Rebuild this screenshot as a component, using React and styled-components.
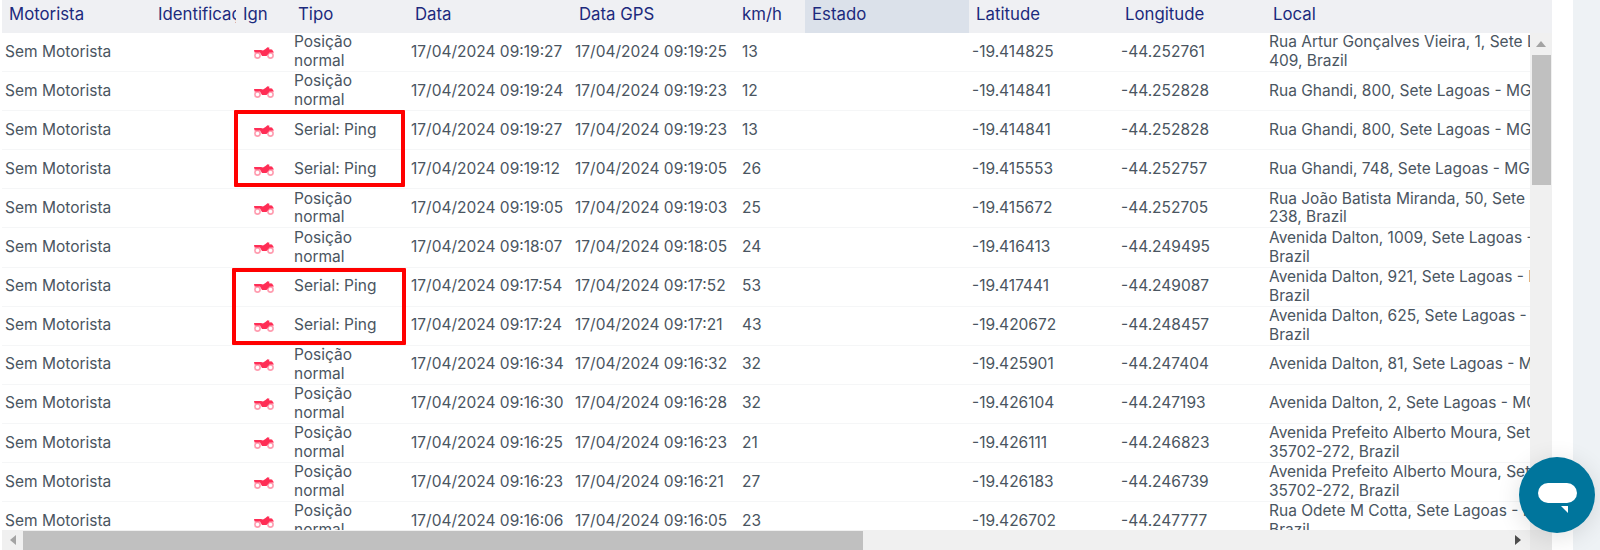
import styled, { createGlobalStyle } from "styled-components"

const COLUMNS = "149px 85px 55px 117px 164px 163px 70px 164px 149px 148px 430px"

const HEADERS = ["Motorista", "Identificação", "Ign", "Tipo", "Data", "Data GPS", "km/h", "Estado", "Latitude", "Longitude", "Local"]

const ALBERTO = "Avenida Prefeito Alberto Moura, Sete Lagoas - MG, 35702-272, Brazil"

const ROWS = [
    ["Posição normal", "09:19:27", "09:19:25", 13, "-19.414825", "-44.252761", "Rua Artur Gonçalves Vieira, 1, Sete Lagoas - MG, 35700-409, Brazil"],
    ["Posição normal", "09:19:24", "09:19:23", 12, "-19.414841", "-44.252828", "Rua Ghandi, 800, Sete Lagoas - MG, 35700-238, Brazil"],
    ["Serial: Ping", "09:19:27", "09:19:23", 13, "-19.414841", "-44.252828", "Rua Ghandi, 800, Sete Lagoas - MG, 35700-238, Brazil"],
    ["Serial: Ping", "09:19:12", "09:19:05", 26, "-19.415553", "-44.252757", "Rua Ghandi, 748, Sete Lagoas - MG, 35700-238, Brazil"],
    ["Posição normal", "09:19:05", "09:19:03", 25, "-19.415672", "-44.252705", "Rua João Batista Miranda, 50, Sete Lagoas - MG, 35700-238, Brazil"],
    ["Posição normal", "09:18:07", "09:18:05", 24, "-19.416413", "-44.249495", "Avenida Dalton, 1009, Sete Lagoas - MG, 35700-000, Brazil"],
    ["Serial: Ping", "09:17:54", "09:17:52", 53, "-19.417441", "-44.249087", "Avenida Dalton, 921, Sete Lagoas - MG, 35700-000, Brazil"],
    ["Serial: Ping", "09:17:24", "09:17:21", 43, "-19.420672", "-44.248457", "Avenida Dalton, 625, Sete Lagoas - MG, 35700-000, Brazil"],
    ["Posição normal", "09:16:34", "09:16:32", 32, "-19.425901", "-44.247404", "Avenida Dalton, 81, Sete Lagoas - MG, 35700, Brazil"],
    ["Posição normal", "09:16:30", "09:16:28", 32, "-19.426104", "-44.247193", "Avenida Dalton, 2, Sete Lagoas - MG, 35700, Brazil"],
    ["Posição normal", "09:16:25", "09:16:23", 21, "-19.426111", "-44.246823", ALBERTO],
    ["Posição normal", "09:16:23", "09:16:21", 27, "-19.426183", "-44.246739", ALBERTO],
    ["Posição normal", "09:16:06", "09:16:05", 23, "-19.426702", "-44.247777", "Rua Odete M Cotta, Sete Lagoas - MG, 35700-000, Brazil"],
]

function MotoIcon() {
    return (
        <svg width="20" height="12" viewBox="0 0 20 12">
            <circle cx="3.5" cy="8.5" r="2.6" fill="none" stroke="#ff9db0" strokeWidth="1.6" />
            <circle cx="16.5" cy="8.5" r="2.6" fill="none" stroke="#ff9db0" strokeWidth="1.6" />
            <path d="M0 3 L7 3 L9 3.6 L11.5 2 L13.5 0.3 L15.5 0.8 L15 2.2 L18 2.6 L20 5.5 L15.5 5.5 L12.5 9 L8 9 L6 5.6 L0.5 5.6 Z" fill="#ff2d55" />
        </svg>
    )
}

export default function App() {
    return (
        <>
            <GlobalStyle />
            <Page>
                <Frame>
                    <Header>
                        {HEADERS.map((h) => (
                            <HeaderCell key={h} $active={h === "Estado"}>{h}</HeaderCell>
                        ))}
                    </Header>

                    <Middle>
                        <Rows>
                            {ROWS.map((r, i) => (
                                <Row key={i}>
                                    <Cell>Sem Motorista</Cell>
                                    <Cell />
                                    <IconCell><MotoIcon /></IconCell>
                                    <Cell>{r[0]}</Cell>
                                    <DateCell>17/04/2024 {r[1]}</DateCell>
                                    <DateCell>17/04/2024 {r[2]}</DateCell>
                                    <SpeedCell>{r[3]}</SpeedCell>
                                    <Cell />
                                    <Cell>{r[4]}</Cell>
                                    <Cell>{r[5]}</Cell>
                                    <Cell>{r[6]}</Cell>
                                </Row>
                            ))}
                        </Rows>
                        <VScroll>
                            <ArrowUp />
                            <VThumb />
                        </VScroll>
                    </Middle>

                    <HScroll>
                        <ArrowLeft />
                        <HThumb />
                        <ArrowRight />
                        <Corner />
                    </HScroll>

                    <Highlight $top={110} $left={234} $width={171} />
                    <Highlight $top={268} $left={232} $width={174} />
                </Frame>
                <Gutter />
                <Strip />
            </Page>

            <ChatButton>
                <ChatBubble />
                <ChatTail />
            </ChatButton>
        </>
    )
}

const GlobalStyle = createGlobalStyle`
    html, body {
        margin: 0;
        height: 550px;
        overflow: hidden;
        background: #ffffff;
    }
`

const Page = styled.div`
    display: flex;
    height: 550px;
    padding-left: 2px;
    font-family: Inter, "Noto Sans", sans-serif;
    font-size: 15.5px;
    color: #4a5561;
`

const Frame = styled.div`
    display: flex;
    flex-direction: column;
    width: 1550px;
`

const Header = styled.div`
    flex: none;
    display: grid;
    grid-template-columns: ${COLUMNS};
    height: 33px;
    overflow: hidden;
    background: #eff0f3;
    color: #1c2a7d;
    font-size: 16.8px;
`

const HeaderCell = styled.div`
    display: flex;
    align-items: center;
    padding: 0 0 6px 7px;
    overflow: hidden;
    white-space: nowrap;
    background: ${(p) => (p.$active ? "#dbe1ea" : "transparent")};
`

const Middle = styled.div`
    flex: 1;
    min-height: 0;
    display: flex;
`

const Rows = styled.div`
    flex: 1;
    min-width: 0;
    overflow: hidden;
`

const Row = styled.div`
    display: grid;
    grid-template-columns: ${COLUMNS};
    height: 39.1px;
    border-bottom: 1px solid #f5f6f7;
    box-sizing: border-box;
`

const Cell = styled.div`
    display: flex;
    align-items: center;
    padding: 0 8px 0 3px;
    line-height: 18.8px;
    overflow: hidden;
`

const DateCell = styled(Cell)`
    padding-right: 0;
    white-space: nowrap;
`

const IconCell = styled(Cell)`
    justify-content: center;
    padding: 1px 0 0 0;
`

const SpeedCell = styled(Cell)`
    padding-left: 7px;
`

const VScroll = styled.div`
    flex: none;
    width: 22px;
    display: flex;
    flex-direction: column;
    align-items: center;
    background: #f0f0f0;
`

const ArrowUp = styled.div`
    margin: 8px 0 8px;
    border-left: 5px solid transparent;
    border-right: 5px solid transparent;
    border-bottom: 6px solid #a3a3a3;
`

const VThumb = styled.div`
    width: 19px;
    height: 130px;
    background: #c0c0c0;
`

const HScroll = styled.div`
    flex: none;
    height: 20px;
    display: flex;
    align-items: center;
    background: #f0f0f0;
`

const ArrowLeft = styled.div`
    margin: 0 7px 0 8px;
    border-top: 5px solid transparent;
    border-bottom: 5px solid transparent;
    border-right: 6px solid #a3a3a3;
`

const HThumb = styled.div`
    width: 840px;
    height: 19px;
    background: #c0c0c0;
`

const ArrowRight = styled.div`
    margin-left: auto;
    border-top: 5px solid transparent;
    border-bottom: 5px solid transparent;
    border-left: 6px solid #4d4d4d;
`

const Corner = styled.div`
    width: 22px;
    height: 20px;
    margin-left: 9px;
    background: #e8e8e8;
`

const Highlight = styled.div`
    position: absolute;
    top: ${(p) => p.$top}px;
    left: ${(p) => p.$left}px;
    width: ${(p) => p.$width}px;
    height: 77px;
    box-sizing: border-box;
    border: 4px solid #ff0000;
    border-radius: 1px;
`

const Gutter = styled.div`
    flex: none;
    width: 21px;
`

const Strip = styled.div`
    flex: 1;
    background: #eef2f5;
`

const ChatButton = styled.div`
    position: fixed;
    left: 1519px;
    top: 457px;
    width: 76px;
    height: 76px;
    border-radius: 50%;
    background: #00759c;
    box-shadow: 0 4px 24px rgba(0, 0, 0, 0.12);
`

const ChatBubble = styled.div`
    position: absolute;
    left: 19px;
    top: 26px;
    width: 39px;
    height: 20px;
    border-radius: 10px;
    background: #ffffff;
`

const ChatTail = styled.div`
    position: absolute;
    left: 42px;
    top: 49px;
    border-top: 7px solid #ffffff;
    border-left: 7px solid transparent;
`
